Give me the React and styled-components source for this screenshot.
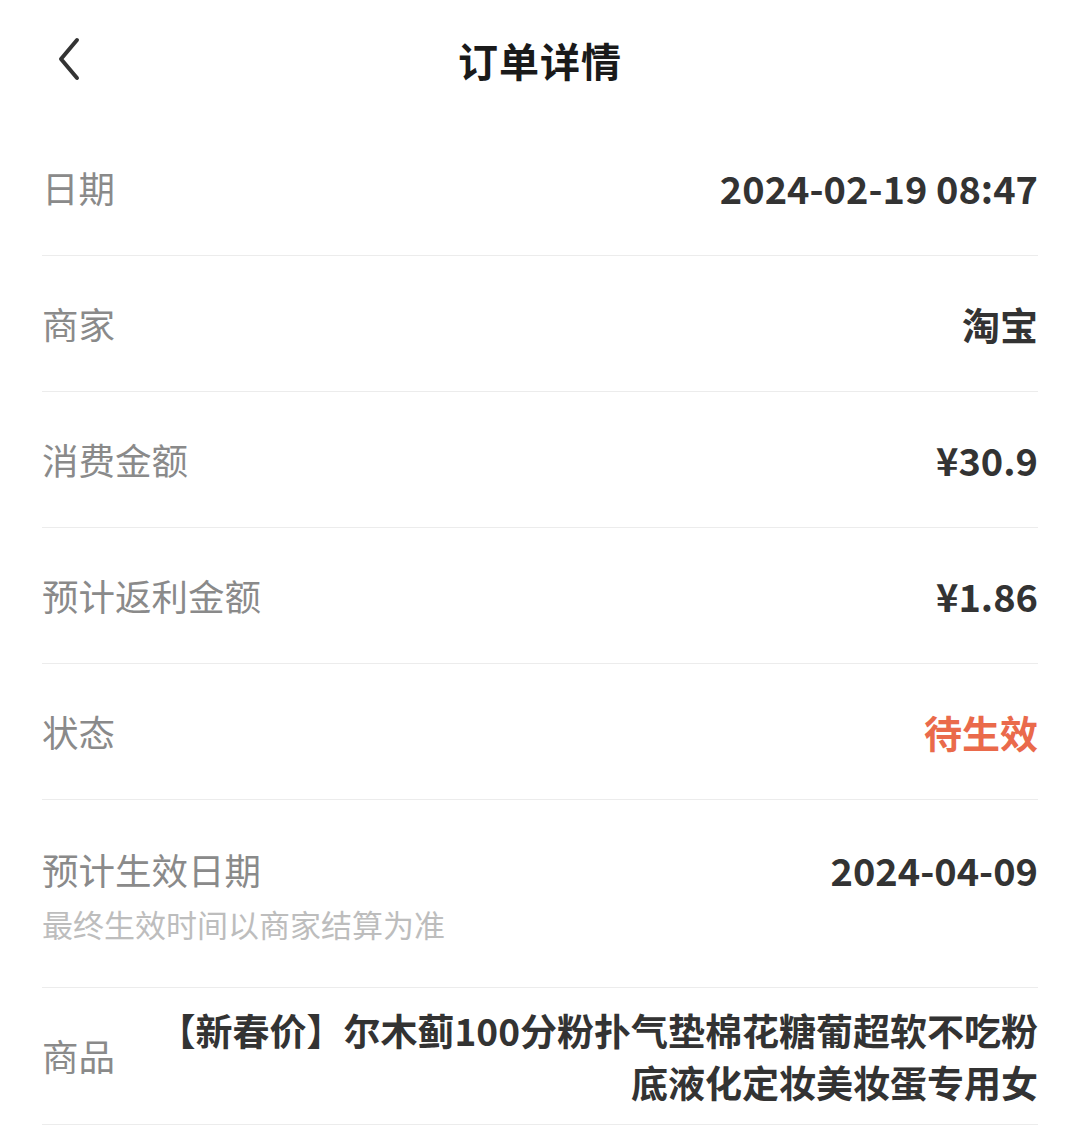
import React from "react"
import styled, { createGlobalStyle } from "styled-components"

const GlobalStyle = createGlobalStyle`
  html, body {
    margin: 0;
    padding: 0;
    background: #ffffff;
  }
  body {
    font-family: "Noto Sans CJK SC", "Noto Sans", sans-serif;
    -webkit-font-smoothing: antialiased;
  }
`

const Page = styled.div`
  width: 1080px;
  min-height: 1131px;
  background: #fff;
`

const Header = styled.header`
  position: relative;
  height: 120px;
  display: flex;
  align-items: center;
  justify-content: center;
`

const BackButton = styled.button`
  position: absolute;
  left: 46px;
  top: 35px;
  width: 44px;
  height: 48px;
  padding: 0;
  border: none;
  background: transparent;
  display: flex;
  align-items: center;
  justify-content: center;
  cursor: pointer;
`

const Title = styled.h1`
  margin: 0;
  font-size: 40px;
  font-weight: 700;
  color: #1a1a1a;
  letter-spacing: 1px;
`

const List = styled.div`
  padding: 0 42px;
`

const Row = styled.div`
  display: flex;
  justify-content: space-between;
  align-items: ${p => (p.$top ? "flex-start" : "center")};
  min-height: ${p => (p.$auto ? "auto" : "135px")};
  padding: ${p => p.$pad || "0"};
  border-bottom: 1px solid #ececec;
`

const LabelBlock = styled.div`
  display: flex;
  flex-direction: column;
  flex-shrink: 0;
`

const Label = styled.span`
  font-size: 36.5px;
  line-height: 50px;
  color: #8a8a8a;
`

const Hint = styled.span`
  margin-top: 8px;
  font-size: 31px;
  line-height: 42px;
  color: #bdbdbd;
`

const Value = styled.span`
  font-size: 38px;
  line-height: 50px;
  font-weight: 700;
  color: ${p => p.$color || "#333333"};
  text-align: right;
`

const Product = styled.div`
  display: flex;
  flex-direction: column;
  align-items: flex-end;
  font-size: 37px;
  line-height: 52px;
  font-weight: 700;
  color: #333333;
`

const ProductLine = styled.span`
  white-space: nowrap;
`

const ChevronLeft = () => (
  <svg width="30" height="44" viewBox="0 0 30 44" fill="none">
    <path
      d="M24 3 L8 22 L24 41"
      stroke="#333"
      strokeWidth="4"
      strokeLinecap="round"
      strokeLinejoin="round"
    />
  </svg>
)

const rows = [
  { label: "日期", value: "2024-02-19 08:47" },
  { label: "商家", value: "淘宝" },
  { label: "消费金额", value: "¥30.9" },
  { label: "预计返利金额", value: "¥1.86" },
  { label: "状态", value: "待生效", color: "#ea6a4b" },
]

export default function App() {
  return (
    <Page>
      <GlobalStyle />
      <Header>
        <BackButton aria-label="返回">
          <ChevronLeft />
        </BackButton>
        <Title>订单详情</Title>
      </Header>

      <List>
        {rows.map(r => (
          <Row key={r.label}>
            <Label>{r.label}</Label>
            <Value $color={r.color}>{r.value}</Value>
          </Row>
        ))}

        <Row $top $auto $pad="45px 0 42px 0">
          <LabelBlock>
            <Label>预计生效日期</Label>
            <Hint>最终生效时间以商家结算为准</Hint>
          </LabelBlock>
          <Value>2024-04-09</Value>
        </Row>

        <Row $auto $pad="16px 0">
          <Label>商品</Label>
          <Product>
            <ProductLine>【新春价】尔木蓟100分粉扑气垫棉花糖葡超软不吃粉</ProductLine>
            <ProductLine>底液化定妆美妆蛋专用女</ProductLine>
          </Product>
        </Row>
      </List>
    </Page>
  )
}
